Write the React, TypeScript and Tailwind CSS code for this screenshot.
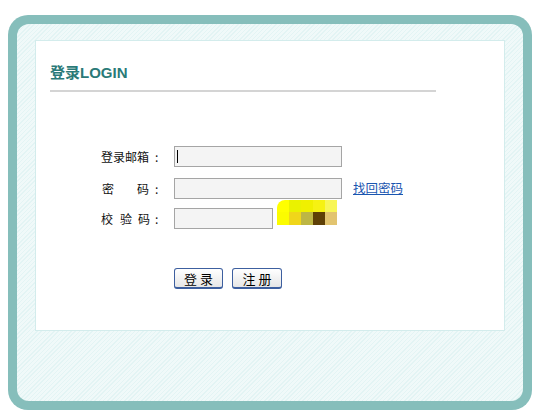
import React from 'react';

const captchaTop = ['#ffff00', '#eaf200', '#f0f000', '#f6f212', '#f8f656'];
const captchaBottom = ['#fcfc00', '#f0d61a', '#bdb644', '#5e4006', '#e2c470'];

function Captcha() {
  return (
    <div className="ml-[4px] -mt-[12px] flex flex-col rounded-tl-[8px] overflow-hidden">
      <div className="flex">
        {captchaTop.map((c, i) => (
          <div key={i} className="w-[12px] h-[12px]" style={{ background: c }} />
        ))}
      </div>
      <div className="flex">
        {captchaBottom.map((c, i) => (
          <div key={i} className="w-[12px] h-[13px]" style={{ background: c }} />
        ))}
      </div>
    </div>
  );
}

const inputCls = 'h-[21px] border border-[#a5a5a5] bg-[#f4f4f4]';
const btnCls =
  'h-[21px] rounded-[3px] border border-[#3d5f9f] border-b-2 bg-gradient-to-b from-white to-[#e6e6e6] text-[13px] leading-none text-black whitespace-pre';

export default function App() {
  return (
    <div className="w-[540px] h-[418px] bg-white pt-[15px] pl-[8px] font-['Noto_Sans_CJK_SC','Noto_Sans',sans-serif]">
      {/* outer teal frame */}
      <div className="w-[524px] h-[395px] p-[9px] rounded-[20px] bg-[#86bebb]">
        <div className="h-full rounded-[12px] pt-[16px] px-[18px] bg-[repeating-linear-gradient(135deg,#e3f4f4_0px,#e3f4f4_1px,#f0f9f9_1px,#f0f9f9_3px)]">
          <div className="w-[470px] h-[291px] bg-white border border-[#d3ecec] pt-[22px] pl-[14px]">
            <div className="text-[15px] leading-[20px] font-bold text-[#2a7a78] font-['Liberation_Sans','Noto_Sans_CJK_SC',sans-serif]">
              登录LOGIN
            </div>
            <div className="mt-[7px] w-[386px] h-[2px] bg-[#d4d4d4]" />

            <div className="mt-[54px] pl-[51px] text-[12px] text-[#111]">
              <div className="flex items-center h-[21px]">
                <div className="w-[73px] flex">
                  <span>登录邮箱</span>
                  <span className="ml-[6px]">:</span>
                </div>
                <div className={`${inputCls} w-[168px] flex items-center pl-[2px]`}>
                  <div className="w-px h-[13px] bg-black" />
                </div>
              </div>
              <div className="flex items-center h-[21px] mt-[11px]">
                <div className="w-[73px] flex">
                  <span className="ml-px">密</span>
                  <span className="ml-[23px]">码</span>
                  <span className="ml-[6px]">:</span>
                </div>
                <div className={`${inputCls} w-[168px]`} />
                <a href="#" className="ml-[11px] text-[12.5px] text-[#1a56b0] underline">找回密码</a>
              </div>
              <div className="flex items-center h-[21px] mt-[9px]">
                <div className="w-[73px] flex">
                  <span>校</span>
                  <span className="ml-[7px]">验</span>
                  <span className="ml-[6px]">码</span>
                  <span className="ml-[5px]">:</span>
                </div>
                <div className={`${inputCls} w-[99px]`} />
                <Captcha />
              </div>
              <div className="flex items-center mt-[39px] pl-[73px] gap-[9px]">
                <button className={`${btnCls} w-[49px]`}>登 录</button>
                <button className={`${btnCls} w-[50px]`}>注 册</button>
              </div>
            </div>
          </div>
        </div>
      </div>
    </div>
  );
}
